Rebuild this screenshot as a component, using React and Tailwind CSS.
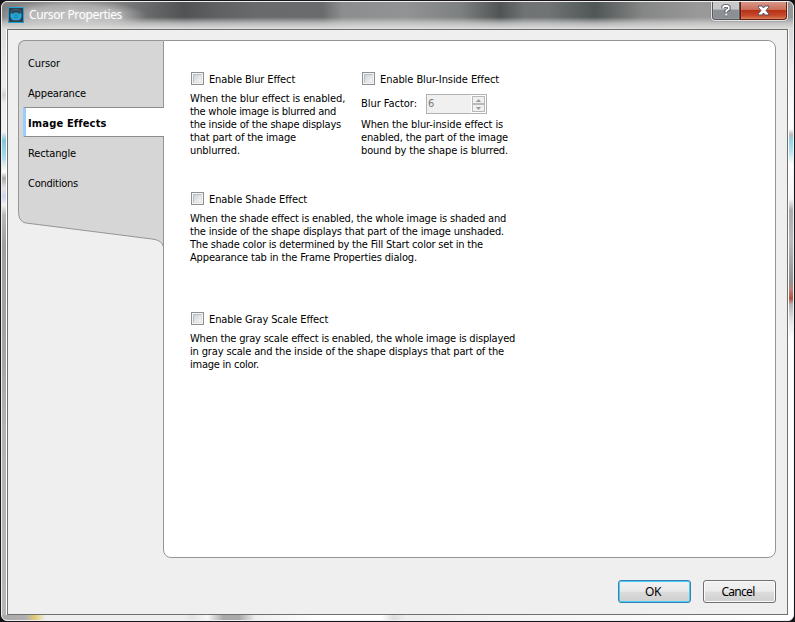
import { useLayoutEffect, useRef } from "react";

const UI = "font-['DejaVu_Sans_Condensed','DejaVu_Sans',sans-serif]";

// One line of text whose tracking is adjusted so that it fills `w` pixels.
function Line({ w, children, className = "" }) {
  const ref = useRef(null);
  useLayoutEffect(() => {
    const el = ref.current;
    el.style.letterSpacing = "0px";
    const natural = el.getBoundingClientRect().width;
    el.style.letterSpacing = `${(w - natural) / children.length}px`;
  }, [w, children]);
  return (
    <span ref={ref} className={`block w-max whitespace-pre ${className}`}>
      {children}
    </span>
  );
}

function Check({ label, w }) {
  return (
    <label className="flex h-[13px] items-center gap-[5px]">
      <span className="size-[13px] border border-[#8e8f8f] bg-[#f4f4f4] p-px">
        <span className="block size-[9px] border border-[#b9bfc7] border-r-[#e0e2e5] border-b-[#e0e2e5] bg-linear-to-br from-[#cdd1d6] to-[#f6f6f6]" />
      </span>
      <Line w={w} className="pt-[2px]">{label}</Line>
    </label>
  );
}

function Desc({ lines }) {
  return (
    <div className="leading-[13px]">
      {lines.map(([t, w]) => (
        <Line key={t} w={w}>{t}</Line>
      ))}
    </div>
  );
}

const tabs = [
  ["Cursor", 32],
  ["Appearance", 58],
  ["Image Effects", 78],
  ["Rectangle", 48],
  ["Conditions", 50],
];

function Sidebar() {
  return (
    <div className="w-[145px]">
      <div className="h-[170px] rounded-tl-[7px] border-t border-l border-[#959595] bg-[#d6d6d6] pt-[6px]">
        {tabs.map(([t, w], i) =>
          i === 2 ? (
            <div key={t} className="relative z-10 -mr-px ml-[4px] flex h-[30px] items-stretch overflow-hidden rounded-l-[2px] border-y border-[#8c8c8c] bg-white font-bold">
              <span className="mr-[3px] w-[3px] bg-[#99ccff]" />
              <Line w={w} className="-ml-px pt-[9px]">{t}</Line>
            </div>
          ) : (
            <div key={t} className="flex h-[30px] items-center pt-[2px] pl-[9px]">
              <Line w={w}>{t}</Line>
            </div>
          )
        )}
      </div>
      <svg className="block" width="146" height="38" viewBox="0 0 146 38">
        <path d="M.5 0C.5 7 2 12 8 13L134 29Q144 30 145.500 37V0Z" fill="#d6d6d6" />
        <path d="M.5 0C.5 7 2 12 8 13L134 29Q144 30 145.500 37" fill="none" stroke="#959595" />
      </svg>
    </div>
  );
}

function Spinner() {
  return (
    <div className="flex h-[20px] w-[61px] items-center justify-between border border-[#b0b3b6] bg-[#f0f0f0] pl-px text-[#7a7a7a]">
      <span className="pb-px">6</span>
      <span className="flex h-[18px] w-[15px] flex-col bg-white p-px">
        {["M1 4h5L3.500 1z", "M1 1h5L3.500 4z"].map((d) => (
          <span key={d} className="flex flex-1 items-center justify-center border border-[#b9b9b9] bg-[#f0f0f0]">
            <svg width="7" height="5" viewBox="0 0 7 5"><path d={d} fill="#989898" /></svg>
          </span>
        ))}
      </span>
    </div>
  );
}

function Panel() {
  return (
    <div className="h-[518px] w-[613px] rounded-[8px] rounded-tl-none border border-[#959595] bg-white pt-[31px] pl-[26px]">
      <div className="flex h-[120px]">
        <div className="w-[171px]">
          <div className="pl-px"><Check label="Enable Blur Effect" w={86} /></div>
          <div className="pt-[7px]">
            <Desc lines={[
              ["When the blur effect is enabled,", 155],
              ["the whole image is blurred and", 146],
              ["the inside of the shape displays", 151],
              ["that part of the image", 106],
              ["unblurred.", 50],
            ]} />
          </div>
        </div>
        <div>
          <div className="pl-px"><Check label="Enable Blur-Inside Effect" w={119} /></div>
          <div className="mt-[9px] mb-[4px] flex items-center">
            <div className="w-[65px] pb-[2px]"><Line w={56}>Blur Factor:</Line></div>
            <Spinner />
          </div>
          <Desc lines={[
            ["When the blur-inside effect is", 142],
            ["enabled, the part of the image", 147],
            ["bound by the shape is blurred.", 147],
          ]} />
        </div>
      </div>
      <div className="h-[120px]">
        <div className="pb-[7px] pl-px"><Check label="Enable Shade Effect" w={98} /></div>
        <Desc lines={[
          ["When the shade effect is enabled, the whole image is shaded and", 316],
          ["the inside of the shape displays that part of the image unshaded.", 314],
          ["The shade color is determined by the Fill Start color set in the", 293],
          ["Appearance tab in the Frame Properties dialog.", 227],
        ]} />
      </div>
      <div>
        <div className="pb-[7px] pl-px"><Check label="Enable Gray Scale Effect" w={119} /></div>
        <Desc lines={[
          ["When the gray scale effect is enabled, the whole image is displayed", 325],
          ["in gray scale and the inside of the shape displays that part of the", 314],
          ["image in color.", 69],
        ]} />
      </div>
    </div>
  );
}

function AppIcon() {
  return (
    <svg width="16" height="16" viewBox="0 0 16 16">
      <rect x=".5" y=".5" width="15" height="15" fill="#343f49" stroke="#22a3d4" />
      <path d="M3.500 6.500Q3.500 2.500 8 2.500T12.500 6.500" fill="none" stroke="#27708f" />
      <path d="M2.500 6.500h3.500l.7-.9h2.600l.7.900h3.500v3.500q-1 3.500-5.500 3.500T2.500 10z" fill="#22a8db" />
      <circle cx="8" cy="9.500" r="1.600" fill="#22a8db" stroke="#27708f" strokeWidth=".8" />
    </svg>
  );
}

function TitleBar() {
  return (
    <div className="flex h-[27px] justify-between bg-[linear-gradient(180deg,transparent_0_56%,#d2d2d2bb_78%,#dededc_100%),radial-gradient(ellipse_75px_16px_at_70px_14px,#c9c9c9cc_0,#c0c0c0aa_65%,transparent_100%),linear-gradient(90deg,#7f7f7f_0,#8a8a8a_8%,#858585_14%,#707172_17%,#505253_23%,#5e6061_27%,#686a6b_32%,#696b6c_40.500%,#8c8d8e_43%,#929394_51%,#7d8080_58%,#505454_63%,#6f7374_66%,#707474_69%,#505555_75%,#858686_81%,#999_88%,#969696_100%)] pl-[6px]">
      <div className="flex items-start gap-[5px] pt-[5px]">
        <AppIcon />
        <span className="font-['Noto_Sans','Open_Sans',sans-serif] text-[12px] leading-[16px] text-white [text-shadow:0_0_5px_#ffffff99]">
          <Line w={93}>Cursor Properties</Line>
        </span>
      </div>
      <div className="mt-[-1px] mr-[5px] flex h-[20px] rounded-b-[4px] border border-t-0 border-[#e3e3e3] shadow-[0_0_1px_#333]">
        <div className="flex w-[28px] items-center justify-center rounded-bl-[4px] border border-t-0 border-[#55585b] bg-linear-to-b from-[#c8c8c8] from-45% to-[#8c9094] to-50% shadow-[inset_0_0_1px_white]">
          <svg width="10" height="13" viewBox="0 0 10 13" fill="none">
            <path d="M2.200 4.500V3L3.500 2h3L7.800 3v2L5.300 6.800V8.300M4.300 10.500h2" stroke="#525768" strokeWidth="3.600" />
            <path d="M2.200 4.500V3L3.500 2h3L7.800 3v2L5.300 6.800V8.300M4.300 10.500h2" stroke="white" strokeWidth="1.800" />
          </svg>
        </div>
        <div className="flex w-[47px] items-center justify-center rounded-br-[4px] border border-t-0 border-[#661c12] bg-[linear-gradient(180deg,#d99b8e_0,#cb6d58_48%,#b63115_52%,#c6472a_80%,#d77a51_100%)] shadow-[inset_0_0_1px_#ffd8cc]">
          <svg width="13" height="11" viewBox="0 0 13 11">
            <path d="M1.500 1h3.500l1.500 2L8 1h3.500v1.500L9 5.500l2.500 3V10H8L6.500 8 5 10H1.500V8.500l2.500-3-2.500-3z" fill="white" stroke="#555463" />
          </svg>
        </div>
      </div>
    </div>
  );
}

export default function App() {
  return (
    <div className={`h-[622px] w-[795px] bg-[#151318] text-[11px] leading-[13px] text-black ${UI}`}>
      <div className="h-[622px] w-[795px] rounded-[7px] border border-[#19171b]">
        <div className="h-[620px] overflow-hidden rounded-[6px] border border-[#efefef] bg-[#f6f6f6]">
          <TitleBar />
          <div className="flex h-[586px]">
            <div className="w-[5px] border-r border-white bg-[linear-gradient(180deg,#ddd_0,#eee_58px,#d0d0d0_66px,#eee_74px,#f2f2f2_103px,#7fc8dd_111px,#a5dced_128px,#eee_138px,#fff_143px,#aaa_149px,#e4e4e4_159px,#c9d5ef_168px,#f2f2f2_176px,#b9b7b7_186px,#a29f9f_215px,#a6a3a3_320px,#b5b2b2_400px,#b8b5b5_586px)]" />
            <div className="w-[781px] border border-[#707070] bg-[#efefef] pt-[10px] pl-[10px]">
              <div className="flex">
                <Sidebar />
                <Panel />
              </div>
              <div className="flex justify-end gap-[12px] pt-[22px] pr-[11px] text-[12px]">
                <button className="flex h-[23px] w-[73px] items-center justify-center rounded-[3px] border border-[#3c7fb1] bg-[linear-gradient(180deg,#f1f1f1_0,#e9e9e9_49%,#dbdbdb_52%,#cfcfcf_100%)] pr-[3px] font-['Noto_Sans',sans-serif] shadow-[inset_0_0_0_1px_#48cdf3]">
                  <Line w={16}>OK</Line>
                </button>
                <button className="flex h-[23px] w-[73px] items-center justify-center rounded-[3px] border border-[#707070] bg-[linear-gradient(180deg,#f2f2f2_0,#ebebeb_49%,#dddddd_52%,#cfcfcf_100%)] pr-[3px] font-['Noto_Sans',sans-serif] shadow-[inset_0_0_0_1px_#fafafa]">
                  <Line w={33}>Cancel</Line>
                </button>
              </div>
            </div>
            <div className="w-[5px] border-l border-white bg-[linear-gradient(180deg,#d8d8d8_0,#f3f3f3_7%,#fff_17%,#bbb_18%,#90d4eb_19%,#b5e3f1_21%,#fff_23%,#f5f5f5_29%,#aaa_31%,#bbb_36%,#929292_43%,#bd8077_44.500%,#b5503f_46%,#b5b5b5_47%,#e8e8e8_50%,#fff_53%,#fff_100%)]" />
          </div>
          <div className="h-[5px] bg-[linear-gradient(90deg,#aaa_0,#b0b0b0_3%,#e0cc75_4.200%,#eee_5.500%,#eee_23%,#e4e4e4_24%,#f6f6f6_26%,#aaa_28%,#aaa_30%,#eee_32%,#fff_40%,#fff_48%,#ddd_49.500%,#eee_51%,#f5f5f5_65%,#fff_100%)]" />
        </div>
      </div>
    </div>
  );
}
